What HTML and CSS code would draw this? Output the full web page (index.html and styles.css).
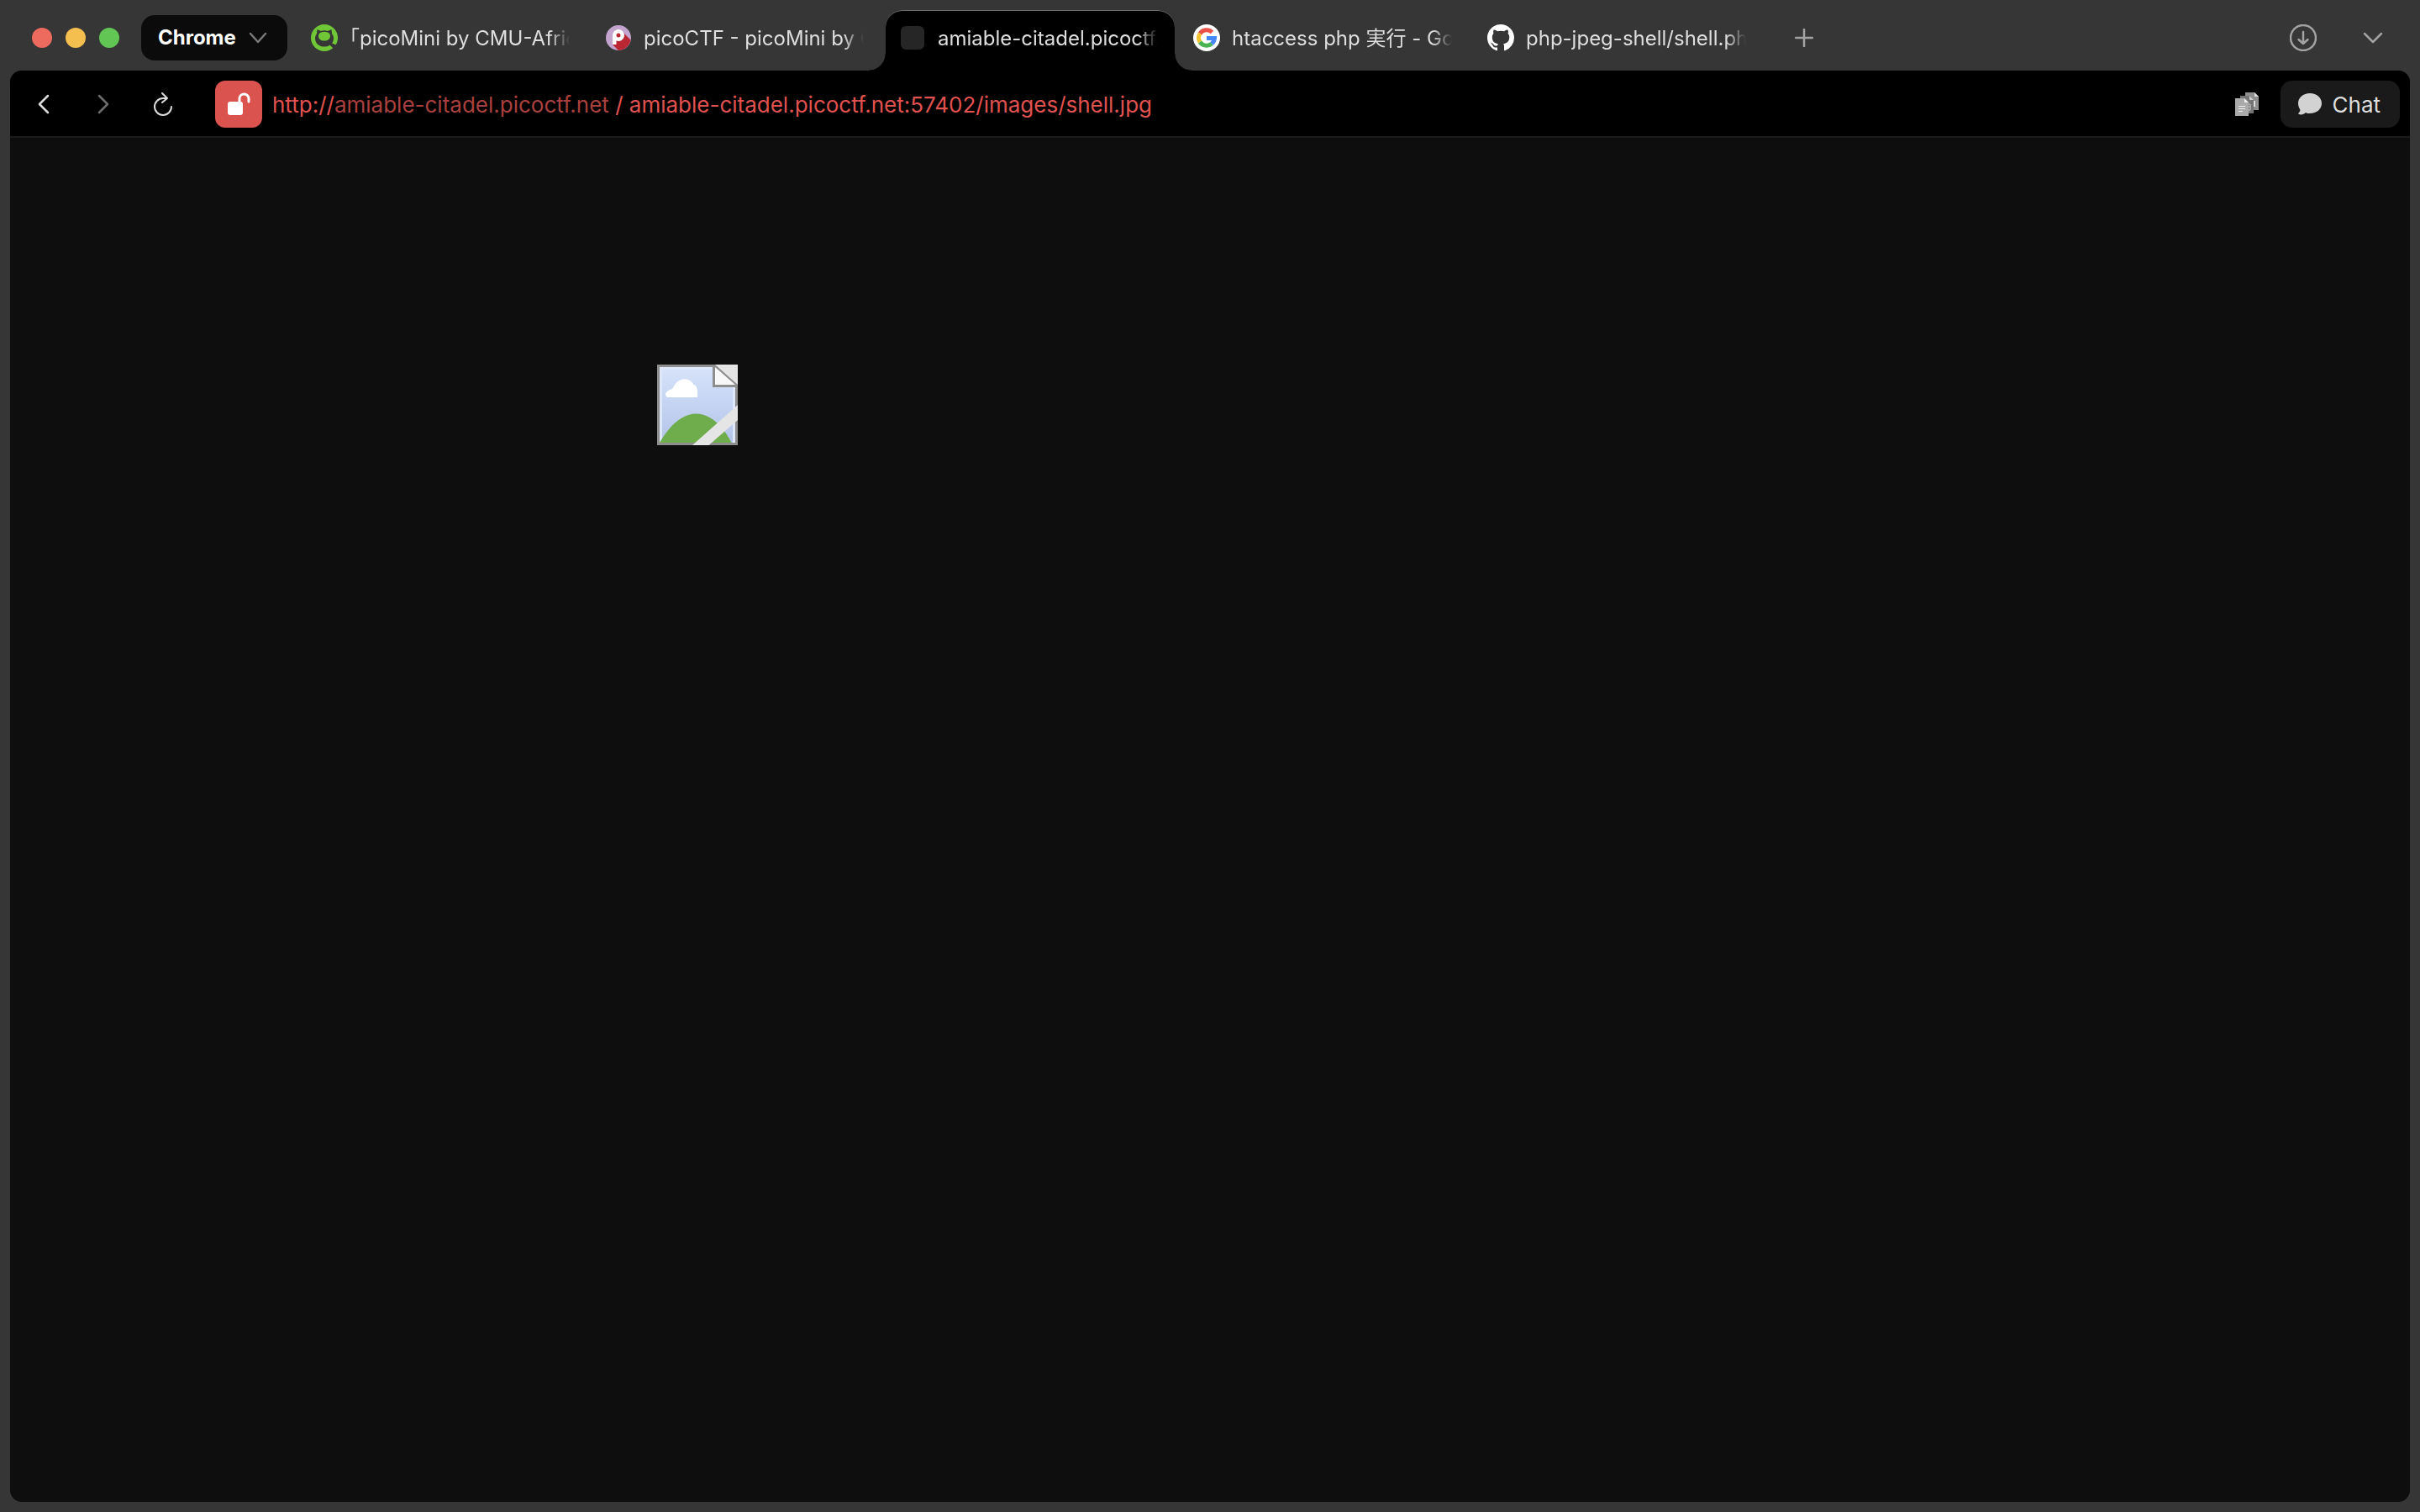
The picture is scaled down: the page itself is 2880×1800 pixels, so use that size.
FILE: index.html
```html
<!DOCTYPE html>
<html lang="en">
<head>
<meta charset="utf-8">
<title>amiable-citadel.picoctf.net</title>
<link rel="stylesheet" href="styles.css">
</head>
<body>
<div class="window">
  <header class="tabstrip">
    <div class="lights">
      <button class="light light-close" aria-label="Close"></button>
      <button class="light light-min" aria-label="Minimize"></button>
      <button class="light light-zoom" aria-label="Zoom"></button>
    </div>
    <button class="profile">
      Chrome
      <svg width="22" height="14" viewBox="0 0 22 14"><path d="M2 2l9 10 9-10" class="stroke"/></svg>
    </button>
    <nav class="tabs">
      <a href="#" class="tab">
        <svg class="favicon" viewBox="0 0 32 32">
          <circle cx="16" cy="16" r="16" fill="#70c637"/>
          <path d="M7.500 6l4.500 2c2.500-1 5.500-1 8 0L24.500 6l.5 5c2.500 3 2.500 7 1 10-1.500 3.500-5.500 5.500-10 5.500S7.500 24.500 6 21C4.500 18 4.500 14 7 11z" fill="#363636"/>
          <path d="M9 14c0-3 2-4 3-4.500 3-1 5-1 8 0 1 .5 3 1.500 3 4.500 0 3.500-3 5.500-7 5.500S9 17.500 9 14z" fill="#70c637"/>
          <path d="M24 22l7 3-4 4-5-5z" fill="#363636"/>
        </svg>
        <span class="title">「picoMini by CMU-Africa</span>
      </a>
      <a href="#" class="tab">
        <svg class="favicon" viewBox="0 0 32 32">
          <circle cx="16" cy="16" r="15" fill="#c2a4ce"/>
          <path d="M21 9l9.500 9.500A15 15 0 0 1 16 31L9 24z" fill="#ba2733"/>
          <path fill-rule="evenodd" d="M9 24V13a7 7 0 1 1 4.500 6.500V24z" fill="#fff"/>
          <circle cx="16" cy="13" r="2.500" fill="#ba2733"/>
        </svg>
        <span class="title">picoCTF - picoMini by CMU</span>
      </a>
      <a href="#" class="tab tab-active" aria-current="page">
        <span class="favicon favicon-blank"></span>
        <span class="title">amiable-citadel.picoctf.net</span>
      </a>
      <a href="#" class="tab">
        <svg class="favicon" viewBox="0 0 32 32">
          <circle cx="16" cy="16" r="16" fill="#fff"/>
          <g fill="none" stroke-width="5">
            <path d="M22.500 9.500A9.500 9.500 0 0 0 8 11" stroke="#ea5147"/>
            <path d="M8 11a9.500 9.500 0 0 0 0 10" stroke="#f3c22f"/>
            <path d="M8 21a9.500 9.500 0 0 0 14 2" stroke="#4bb455"/>
            <path d="M22 23a9.500 9.500 0 0 0 3.500-6.500H16" stroke="#4686f3"/>
          </g>
        </svg>
        <span class="title">htaccess php 実行 - Google</span>
      </a>
      <a href="#" class="tab">
        <svg class="favicon" viewBox="0 0 16 16"><path fill="#fff" d="M8 0C3.580 0 0 3.580 0 8c0 3.540 2.290 6.530 5.470 7.590.4.070.550-.170.550-.380 0-.190-.010-.820-.010-1.490-2.010.370-2.530-.490-2.690-.940-.090-.230-.480-.940-.820-1.130-.280-.150-.680-.520-.010-.530.630-.010 1.080.580 1.230.820.720 1.210 1.870.870 2.330.660.070-.520.280-.870.510-1.070-1.780-.2-3.640-.890-3.640-3.950 0-.870.310-1.590.820-2.150-.080-.2-.360-1.020.080-2.120 0 0 .670-.210 2.200.820.640-.180 1.320-.270 2-.270s1.360.090 2 .270c1.530-1.040 2.200-.820 2.200-.820.440 1.100.160 1.920.080 2.120.510.560.820 1.270.820 2.150 0 3.070-1.870 3.750-3.650 3.950.290.250.540.730.540 1.480 0 1.070-.010 1.930-.010 2.200 0 .210.150.460.550.380A8.010 8.010 0 0 0 16 8c0-4.420-3.580-8-8-8z"/></svg>
        <span class="title">php-jpeg-shell/shell.php</span>
      </a>
    </nav>
    <button class="icon-button" aria-label="New tab">
      <svg width="22" height="22" viewBox="0 0 22 22"><path d="M11 1v20M1 11h20" class="stroke"/></svg>
    </button>
    <div class="window-tools">
      <button class="icon-button" aria-label="Downloads">
        <svg width="32" height="32" viewBox="0 0 32 32"><circle cx="16" cy="16" r="15" class="stroke"/><path d="M16 9v14M10.500 18l5.500 5 5.500-5" class="stroke"/></svg>
      </button>
      <button class="icon-button" aria-label="Tab list">
        <svg width="24" height="14" viewBox="0 0 24 14"><path d="M2 2l10 10L22 2" class="stroke"/></svg>
      </button>
    </div>
  </header>
  <main class="frame">
    <div class="toolbar">
      <div class="history">
        <button class="icon-button" aria-label="Back">
          <svg width="14" height="24" viewBox="0 0 14 24"><path d="M12 2L2 12l10 10" class="stroke"/></svg>
        </button>
        <button class="icon-button icon-dim" aria-label="Forward">
          <svg width="14" height="24" viewBox="0 0 14 24"><path d="M2 2l10 10L2 22" class="stroke"/></svg>
        </button>
        <button class="icon-button" aria-label="Reload">
          <svg width="24" height="28" viewBox="0 0 24 28"><path d="M17 7h-5a10 10 0 1 0 10 10M11 1l6 6-6 5" class="stroke thin"/></svg>
        </button>
      </div>
      <button class="lock" aria-label="Not secure">
        <svg width="28" height="28" viewBox="0 0 28 28"><rect x="1" y="11" width="18" height="16" rx="3" fill="#fff"/><path d="M15 12V7.500a5.500 5.500 0 0 1 11 0V11" fill="none" stroke="#fff" stroke-width="3" stroke-linecap="round"/></svg>
      </button>
      <a href="#" class="url">http://<span class="host">amiable-citadel.picoctf.net</span> / amiable-citadel.picoctf.net:57402/images/shell.jpg</a>
      <button class="icon-button copies" aria-label="Documents">
        <svg width="28" height="28" viewBox="0 0 28 28">
          <path d="M12 0h11l5 5v16H12z" fill="#8f8f8f"/><path d="M23 0l5 5h-5z" fill="#ddd"/><path d="M20 10h4v7h-4" fill="#ddd"/>
          <path d="M6 4h11l5 5v16H6z" fill="#757575"/><path d="M17 4l5 5h-5z" fill="#ccc"/><path d="M14 14h4v7h-4M14 17h4" fill="none" stroke="#ccc"/>
          <path d="M0 7h11l5 5v16H0z" fill="#aaa"/><path d="M11 7l5 5h-5z" fill="#eee"/><path d="M4 16.500h8M4 19.500h8M4 22.500h5" stroke="#eee"/>
        </svg>
      </button>
      <button class="chat">
        <svg width="30" height="26" viewBox="0 0 30 26"><path d="M15 0c8 0 14 5 14 12s-6 12-14 12c-2 0-4 0-5-1-2 2-5 3-8 2-1 0-1-1 0-2 1-1 2-3 1-4-1-2-2-4-2-7C1 5 7 0 15 0z" fill="#d2d2d2"/></svg>
        <span class="label">Chat</span>
      </button>
    </div>
    <section class="page">
      <svg class="broken" viewBox="0 0 32 32" role="img" aria-label="Broken image">
        <defs><linearGradient id="sky" x2="0" y2="1"><stop offset="0" stop-color="#d5e2f9"/><stop offset="1" stop-color="#b3c4ea"/></linearGradient></defs>
        <rect width="32" height="32" fill="#8e8e8e"/>
        <rect x="1" y="1" width="30" height="30" fill="#dfe7fa"/>
        <rect x="2" y="2" width="28" height="29" fill="url(#sky)"/>
        <path d="M4 13c-1-1-1-2 1-3 1 0 1.500-1 2-2 2-3 6-3 7.500 0 1 0 1.500 1.500 1.500 3v2z" fill="#fff"/>
        <path d="M1 31c4-7 9-11.500 14.500-11.500S26 24 29.500 31z" fill="#6fac4c"/>
        <path d="M22 0v9h10V0z" fill="#8e8e8e"/>
        <path d="M23 0l9 8V0z" fill="#e5e5e5"/>
        <path d="M23 1v7h8z" fill="#f8f8f8"/>
        <path d="M14 32L32 16v6L20.500 32z" fill="#e5e5e5"/>
      </svg>
    </section>
  </main>
</div>
</body>
</html>
```
FILE: styles.css
```css
* { box-sizing: border-box; }
body {
  margin: 0;
  background: #363636;
  color: #dedede;
  font-family: Inter, "Noto Sans CJK JP", sans-serif;
  font-size: 26px;
  line-height: 32px;
}
a { color: inherit; text-decoration: none; }
button {
  margin: 0;
  padding: 0;
  border: 0;
  background: none;
  color: inherit;
  font: inherit;
}
svg { display: block; flex: none; }
.stroke {
  fill: none;
  stroke: currentColor;
  stroke-width: 2.5;
  stroke-linecap: round;
  stroke-linejoin: round;
}
.thin { stroke-width: 2; }
.window {
  display: flex;
  flex-direction: column;
  min-height: 100vh;
  padding: 0 12px 12px;
}
.tabstrip {
  display: flex;
  align-items: center;
  height: 84px;
  padding: 6px 24px 0 26px;
}
.lights { display: flex; gap: 16px; margin-right: 26px; }
.light { width: 24px; height: 24px; border-radius: 50%; }
.light-close { background: #ed6a5f; }
.light-min { background: #f5bf50; }
.light-zoom { background: #62c655; }
.profile {
  display: flex;
  align-items: center;
  justify-content: space-between;
  width: 174px;
  height: 54px;
  margin-right: 12px;
  padding: 0 24px 0 20px;
  border-radius: 16px;
  background: #0b0b0b;
  color: #fff;
  font-size: 24px;
  font-weight: 700;
}
.profile svg { color: #7a7a7a; }
.tabs { display: flex; align-self: flex-end; gap: 6px; }
.tab {
  position: relative;
  display: flex;
  align-items: center;
  gap: 14px;
  width: 344px;
  height: 72px;
  padding: 0 20px 6px 16px;
}
.favicon { width: 32px; height: 32px; flex: none; }
.favicon-blank { border: 2px solid #000; border-radius: 8px; background: #262626; }
.title, .url, .label { padding-top: 2px; }
.title {
  flex: 1;
  overflow: hidden;
  white-space: nowrap;
  font-size: 24px;
  font-feature-settings: "halt";
  mask-image: linear-gradient(to right, #000 calc(100% - 24px), transparent);
}
.tab-active {
  border-radius: 20px 20px 0 0;
  background: #000;
  box-shadow: inset 0 1px 0 #6a6a6a;
}
.tab-active::before,
.tab-active::after {
  content: "";
  position: absolute;
  bottom: 0;
  width: 20px;
  height: 20px;
}
.tab-active::before { right: 100%; background: radial-gradient(circle at 0 0, transparent 19px, #000 20px); }
.tab-active::after { left: 100%; background: radial-gradient(circle at 100% 0, transparent 19px, #000 20px); }
.icon-button { display: grid; place-items: center; width: 56px; height: 56px; color: #a3a3a3; }
.tabstrip > .icon-button { margin-left: 21px; }
.window-tools { display: flex; gap: 27px; margin-left: auto; margin-right: -8px; }
.frame {
  flex: 1;
  display: flex;
  flex-direction: column;
  border-radius: 14px;
  overflow: hidden;
  background: #0e0e0e;
}
.toolbar {
  display: flex;
  align-items: center;
  height: 80px;
  padding: 2px 12px 0;
  border-bottom: 2px solid #1b1b1b;
  background: #000;
}
.history { display: flex; gap: 15px; margin-right: 34px; }
.history .icon-button { color: #dcdcdc; }
.history .icon-dim { color: #6c6c6c; }
.lock {
  display: grid;
  place-items: center;
  width: 56px;
  height: 56px;
  margin-right: 12px;
  border-radius: 12px;
  background: #da534f;
}
.url { flex: 1; color: #e0524e; white-space: nowrap; }
.host { color: #aa403d; }
.copies { margin-right: 12px; }
.chat {
  display: flex;
  align-items: center;
  gap: 12px;
  height: 56px;
  padding: 0 23px 0 20px;
  border-radius: 14px;
  background: #1a1a1a;
}
.page { flex: 1; padding: 270px 770px; }
.broken { width: 96px; height: 96px; }
```
